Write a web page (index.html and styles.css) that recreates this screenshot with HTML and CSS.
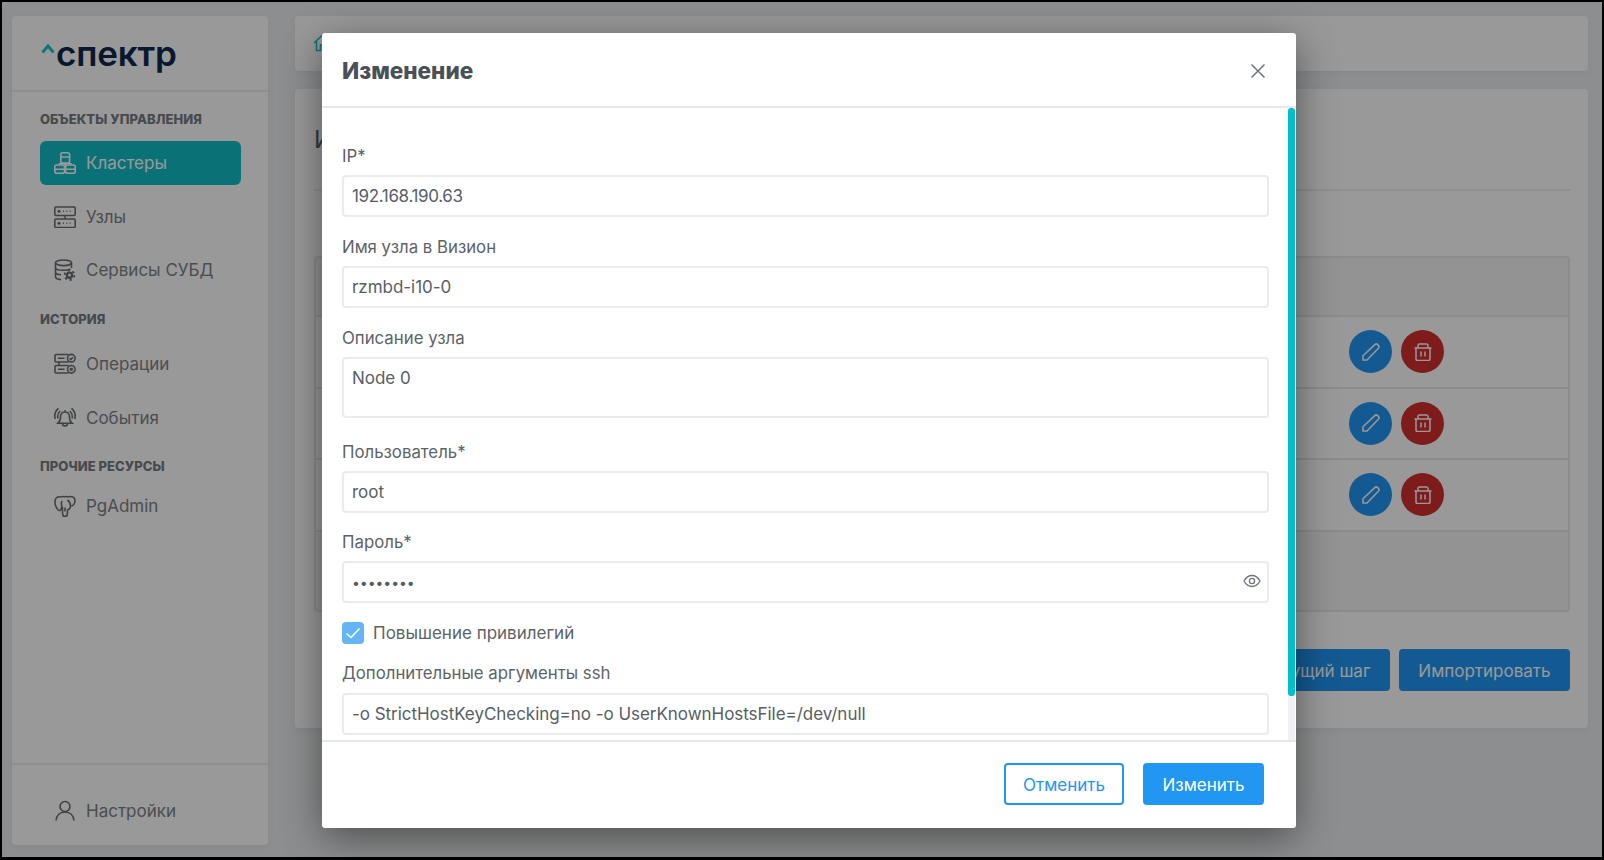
FILE: index.html
```html
<!DOCTYPE html>
<html lang="ru">
<head>
<meta charset="utf-8">
<title>Спектр</title>
<link rel="stylesheet" href="styles.css">
</head>
<body>
<svg class="defs" width="0" height="0">
  <symbol id="i-edit" viewBox="0 0 18 18"><path d="M1 17v-4.200L12.800 1.600a2 2 0 0 1 2.800 0l.8.8a2 2 0 0 1 0 2.800L5 17Z"/></symbol>
  <symbol id="i-del" viewBox="0 0 18 18"><path d="M.5 5h17M4 5V2.500A1.500 1.500 0 0 1 5.500 1h7A1.500 1.500 0 0 1 14 2.500V5M2 5v11a1.500 1.500 0 0 0 1.500 1.500h11A1.500 1.500 0 0 0 16 16V5M7 8.500v5M11 8.500v5"/></symbol>
</svg>
<div class="frame">
  <aside class="sidebar">
    <div class="logo">
      <svg class="logo-caret" width="14" height="10" viewBox="0 0 14 10"><path d="M1.500 8.500 7 2l5.500 6.500" fill="none" stroke="#1fc4cc" stroke-width="3"/></svg>
      <span class="logo-text">спектр</span>
    </div>
    <nav class="nav">
      <div class="nav-title">ОБЪЕКТЫ УПРАВЛЕНИЯ</div>
      <a class="nav-item active">
        <svg class="ico" viewBox="0 0 22 22"><rect x="6.800" y=".8" width="8.800" height="10.200" rx="2"/><path d="M6.800 5h8.800M11.200 11v2M5.500 13v-1.200h11.500V13"/><rect x=".8" y="13" width="9.700" height="8.300" rx="1.800"/><rect x="11.600" y="13" width="9.700" height="8.300" rx="1.800"/><path d="M.8 17.200h9.700M11.600 17.200h9.700"/></svg>
        <span>Кластеры</span>
      </a>
      <a class="nav-item">
        <svg class="ico" viewBox="0 0 22 22"><rect x=".8" y="1" width="20.400" height="8.500" rx="1.200"/><rect x=".8" y="13" width="20.400" height="8.500" rx="1.200"/><path d="M11 9.500V13"/><circle class="solid-dot" cx="5" cy="5.200" r="1.500"/><circle class="solid-dot" cx="5" cy="17.200" r="1.500"/><path class="dots" d="M9 5.200h1M12.300 5.200h1M15.600 5.200h1M9 17.200h1M12.300 17.200h1M15.600 17.200h1"/></svg>
        <span>Узлы</span>
      </a>
      <a class="nav-item">
        <svg class="ico" viewBox="0 0 22 22"><ellipse cx="9.500" cy="3.800" rx="8" ry="2.800"/><path d="M1.500 3.800v14c0 1.500 2.500 2.600 5.500 2.800M17.500 3.800V9M1.500 8.500c0 1.600 3.500 2.800 8 2.800 3 0 5.500-.5 7-1.500M1.500 13c0 1.500 2.500 2.600 5.500 2.800"/><circle class="gear" cx="15.500" cy="16.200" r="3.700"/><circle class="gear-teeth" cx="15.500" cy="16.200" r="4.800"/><circle class="gear-hole" cx="15.500" cy="16.200" r="1.400"/></svg>
        <span>Сервисы СУБД</span>
      </a>
      <div class="nav-title history">ИСТОРИЯ</div>
      <a class="nav-item">
        <svg class="ico" viewBox="0 0 22 22"><path d="M14.500 1.500H2a1 1 0 0 0-1 1V8a1 1 0 0 0 1 1h12.500M14.500 12.500H2a1 1 0 0 0-1 1V19a1 1 0 0 0 1 1h12.500M4 5.200h6.500M4 16.300h6.500M5 9v3.500"/><circle cx="17.300" cy="5.200" r="3.800"/><circle cx="17.300" cy="16.300" r="3.800"/><path d="m15.700 5.300 1.200 1.200 2-2.300M16 15l2.600 2.600M18.600 15 16 17.600"/></svg>
        <span>Операции</span>
      </a>
      <a class="nav-item">
        <svg class="ico" viewBox="0 0 22 22"><path d="M11 5c-3 0-4.500 2.300-4.500 5.200 0 2.800-.8 4.600-2.500 6h14c-1.700-1.400-2.500-3.200-2.500-6C15.500 7.300 14 5 11 5ZM8.500 16.500c0 3.200 5 3.200 5 0M11 3.300V5M4 11.500c-.8-2.800 0-5.500 2.200-7.500M1.300 12C.1 8 1.300 4 4.500 1.300M18 11.500c.8-2.800 0-5.500-2.200-7.500M20.700 12c1.200-4 0-8-3.200-10.700"/></svg>
        <span>События</span>
      </a>
      <div class="nav-title other">ПРОЧИЕ РЕСУРСЫ</div>
      <a class="nav-item">
        <svg class="ico" viewBox="0 0 22 22"><path d="M7 2C3 1 1 3.500 1 6.500c0 3.500 1.700 7 3.200 8.500 1.300 1.200 2.500.3 3-1.200l.8-2.300M14 2c3-1.200 7.500 0 7 4-.3 2.500-1.500 4.500-3.500 5M7 2c1.300-.6 2.500-.6 4-.2 1.200-.4 2-.4 3 .2M8 6c-1.500 3-.5 5 .5 7v5c0 2 1 3.500 2.500 3.500s2.500-1.500 2.500-3.500v-3c2-.5 3-2 3-4 0-2.500-1-4.500-3-6M11 12.500v4"/></svg>
        <span>PgAdmin</span>
      </a>
    </nav>
    <div class="sidebar-foot">
      <a class="nav-item">
        <svg class="ico" viewBox="0 0 22 22"><circle cx="11" cy="6.500" r="5"/><path d="M2 20.500c.5-5 4-8.500 9-8.500s8.500 3.500 9 8.500"/></svg>
        <span>Настройки</span>
      </a>
    </div>
  </aside>

  <main class="main">
    <div class="crumbs">
      <svg class="home" width="18" height="18" viewBox="0 0 18 18"><path d="M1 9 9 1.500 17 9M3.500 7v9.500h4V11h3v5.500h4V7"/></svg>
    </div>
    <section class="panel">
      <h1 class="panel-title">Импорт кластера</h1>
      <div class="panel-rule"></div>
      <div class="table">
        <div class="thead"></div>
        <div class="row">
          <button class="round edit"><svg class="rico"><use href="#i-edit"/></svg></button>
          <button class="round del"><svg class="rico"><use href="#i-del"/></svg></button>
        </div>
        <div class="row">
          <button class="round edit"><svg class="rico"><use href="#i-edit"/></svg></button>
          <button class="round del"><svg class="rico"><use href="#i-del"/></svg></button>
        </div>
        <div class="row">
          <button class="round edit"><svg class="rico"><use href="#i-edit"/></svg></button>
          <button class="round del"><svg class="rico"><use href="#i-del"/></svg></button>
        </div>
      </div>
      <div class="panel-actions">
        <button class="btn primary">Предыдущий шаг</button>
        <button class="btn primary">Импортировать</button>
      </div>
    </section>
  </main>

  <div class="overlay"></div>

  <div class="modal">
    <header class="modal-head">
      <h2 class="modal-title">Изменение</h2>
      <svg class="close" width="16" height="16" viewBox="0 0 16 16"><path d="M1.500 1.500l13 13M14.500 1.500l-13 13"/></svg>
    </header>
    <div class="modal-body">
      <div class="modal-form">
        <label class="field">
          <span class="label">IP*</span>
          <input class="input tight" type="text" value="192.168.190.63">
        </label>
        <label class="field">
          <span class="label">Имя узла в Визион</span>
          <input class="input" type="text" value="rzmbd-i10-0">
        </label>
        <label class="field field-area">
          <span class="label">Описание узла</span>
          <textarea class="input area">Node 0</textarea>
        </label>
        <label class="field field-short">
          <span class="label">Пользователь*</span>
          <input class="input" type="text" value="root">
        </label>
        <label class="field field-pass">
          <span class="label">Пароль*</span>
          <span class="pass">
            <input class="input secret" type="password" value="12345678">
            <svg class="eye" width="18" height="14" viewBox="0 0 18 14"><path d="M1 7c2-3.600 4.800-5.500 8-5.500S15 3.400 17 7c-2 3.600-4.800 5.500-8 5.500S3 10.600 1 7Z"/><circle cx="9" cy="7" r="2.600"/></svg>
          </span>
        </label>
        <div class="check">
          <span class="check-box"><svg width="16" height="12" viewBox="0 0 16 12"><path d="M1.500 6.500 6 10.500 14.500 1.500"/></svg></span>
          <span class="check-label">Повышение привилегий</span>
        </div>
        <label class="field field-last">
          <span class="label">Дополнительные аргументы ssh</span>
          <input class="input" type="text" value="-o StrictHostKeyChecking=no -o UserKnownHostsFile=/dev/null">
        </label>
      </div>
      <div class="scroll"><div class="thumb"></div></div>
    </div>
    <footer class="modal-foot">
      <button class="btn outline">Отменить</button>
      <button class="btn solid">Изменить</button>
    </footer>
  </div>
</div>
</body>
</html>
```

FILE: styles.css
```css
* { box-sizing: border-box; }
html, body { margin: 0; padding: 0; }
body { width: 1604px; height: 860px; overflow: hidden; font-family: Inter, "Noto Sans", sans-serif; }
.defs { position: absolute; }

.frame {
  position: relative;
  width: 1604px;
  height: 860px;
  border: 2px solid #000;
  border-bottom-width: 3px;
  background: #ebedef;
  padding: 14px 14px 12px 10px;
  display: flex;
  gap: 27px;
  overflow: hidden;
}

/* sidebar */
.sidebar {
  width: 256px;
  flex: none;
  background: #fff;
  border-radius: 4px;
  display: flex;
  flex-direction: column;
  box-shadow: 0 2px 6px rgba(0,0,0,.05);
}
.logo {
  height: 76px;
  border-bottom: 2px solid #eceef0;
  display: flex;
  align-items: flex-start;
  padding: 17px 0 0 29px;
}
.logo-caret { margin-top: 11px; flex: none; }
.logo-text { font-size: 35px; line-height: 40px; font-weight: 600; color: #0e2a4c; margin-left: 1px; letter-spacing: -.15px; }

.nav { flex: 1; padding: 17px 27px 0 28px; display: flex; flex-direction: column; }
.nav-title { font-size: 13px; line-height: 20px; font-weight: 800; color: #777c80; height: 20px; margin-bottom: 12px; letter-spacing: .05px; }
.nav-title.history { margin-top: 7.500px; margin-bottom: 13px; }
.nav-title.other { margin-top: 7px; margin-bottom: 8px; }
.nav-item {
  height: 44px;
  margin-bottom: 9.500px;
  display: flex;
  align-items: center;
  gap: 10px;
  padding-left: 14px;
  border-radius: 6px;
  font-size: 17px;
  color: #7d8286;
}
.nav-item.active { background: #12bec6; color: #fff; }
.ico { width: 22px; height: 22px; flex: none; fill: none; stroke: #6a6f73; stroke-width: 1.600; }
.active .ico { stroke: #fff; }
.ico .dots { stroke-width: 1.500; }
.ico .solid-dot { fill: #6a6f73; stroke: none; }
.ico .gear { fill: #6a6f73; stroke: none; }
.ico .gear-teeth { stroke: #6a6f73; stroke-width: 1.800; stroke-dasharray: 2.200 2.830; }
.ico .gear-hole { fill: #fff; stroke: none; }
.sidebar-foot { height: 82px; border-top: 2px solid #eceef0; padding: 24px 27px 0 28px; }

/* main */
.main { flex: 1; min-width: 0; display: flex; flex-direction: column; gap: 18px; }
.crumbs {
  height: 55px;
  background: #fff;
  border-radius: 4px;
  padding: 18px 0 0 18px;
  box-shadow: 0 2px 6px rgba(0,0,0,.05);
}
.home { fill: none; stroke: #12bec6; stroke-width: 1.500; display: block; }
.panel {
  height: 639px;
  background: #fff;
  border-radius: 4px;
  padding: 32px 18px 0 19px;
  box-shadow: 0 2px 6px rgba(0,0,0,.05);
}
.panel-title { margin: 0; font-size: 24px; line-height: 38px; font-weight: 400; color: #5c6368; }
.panel-rule { height: 2px; background: #eceef0; margin-top: 30px; }
.table {
  margin-top: 65px;
  height: 356px;
  background: #f5f5f5;
  border: 2px solid #e8e8e8;
  border-radius: 4px;
}
.thead { height: 57px; }
.row {
  height: 71.500px;
  background: #fff;
  border-top: 2px solid #e8e8e8;
  display: flex;
  align-items: center;
  justify-content: flex-end;
  gap: 9px;
  padding-right: 124px;
}
.row:last-child { border-bottom: 2px solid #e8e8e8; height: 73.500px; }
.round {
  width: 43px;
  height: 43px;
  padding: 0;
  border: 0;
  border-radius: 50%;
  display: flex;
  align-items: center;
  justify-content: center;
}
.round.edit { background: #2196f3; }
.round.del { background: #d32f2f; }
.rico { width: 18px; height: 18px; fill: none; stroke: #fff; stroke-width: 1.500; }
.panel-actions { display: flex; justify-content: flex-end; gap: 9px; margin-top: 37px; }
.btn {
  height: 42px;
  border-radius: 4px;
  border: 0;
  padding-top: 2px;
  font: 400 17px Inter, "Noto Sans", sans-serif;
}
.btn.primary { background: #2196f3; color: #fff; padding-left: 19.500px; padding-right: 19.500px; }

/* overlay + modal */
.overlay { position: absolute; inset: 0; background: rgba(0,0,0,.4); }
.modal {
  position: absolute;
  left: 320px;
  top: 31px;
  width: 974px;
  height: 795px;
  background: #fff;
  border-radius: 3px;
  display: flex;
  flex-direction: column;
  box-shadow: 0 10px 40px rgba(0,0,0,.45);
}
.modal-head {
  height: 75px;
  flex: none;
  border-bottom: 2px solid #e6e9ec;
  display: flex;
  align-items: center;
  justify-content: space-between;
  padding: 2px 30px 0 20px;
}
.modal-title { margin: 0; font-size: 22.500px; font-weight: 800; color: #495057; }
.close { fill: none; stroke: #6c757d; stroke-width: 1.500; }
.modal-body { position: relative; flex: 1; overflow: hidden; min-height: 0; }
.modal-form { padding: 36px 27px 0 20px; }
.field { display: block; margin-bottom: 18px; }
.field-area { margin-bottom: 22px; }
.field-short { margin-bottom: 17px; }
.field-pass { margin-bottom: 0; }
.label { display: block; font-size: 16.800px; line-height: 24px; color: #5c6368; margin-bottom: 7px; }
.field-last .label { margin-bottom: 8px; }
.input {
  display: block;
  width: 100%;
  height: 42px;
  border: 2px solid #e9ebef;
  border-radius: 4px;
  padding: 0 8px;
  font: 400 17px Inter, "Noto Sans", sans-serif;
  letter-spacing: -.04px;
  color: #565e64;
  background: #fff;
  outline: none;
}
.input.tight { letter-spacing: -.35px; }
.input.secret { font-size: 14px; }
.area { height: 61px; padding: 7px 8px; resize: none; line-height: 24px; }
.pass { display: block; position: relative; }
.eye { position: absolute; right: 8px; top: 13px; fill: none; stroke: #6c757d; stroke-width: 1.300; }
.check { display: flex; align-items: center; gap: 9px; height: 22px; margin: 19px 0 17px; }
.check-box {
  width: 22px;
  height: 22px;
  border-radius: 4px;
  background: #64b5f6;
  display: flex;
  align-items: center;
  justify-content: center;
}
.check-box svg { fill: none; stroke: #fff; stroke-width: 1.500; }
.check-label { font-size: 17px; color: #5c6368; }
.scroll { position: absolute; top: 0; bottom: 0; right: 1px; width: 7px; background: #f0f0f5; }
.thumb { height: 588px; background: #00bfcc; border-radius: 3px; }
.modal-foot {
  height: 88px;
  flex: none;
  border-top: 2px solid #e6e9ec;
  display: flex;
  justify-content: flex-end;
  gap: 19px;
  padding: 21px 32px 0 0;
}
.btn.outline { width: 120px; background: #fff; border: 2px solid #2196f3; color: #2196f3; }
.btn.solid { width: 121px; background: #2196f3; color: #fff; }
```
